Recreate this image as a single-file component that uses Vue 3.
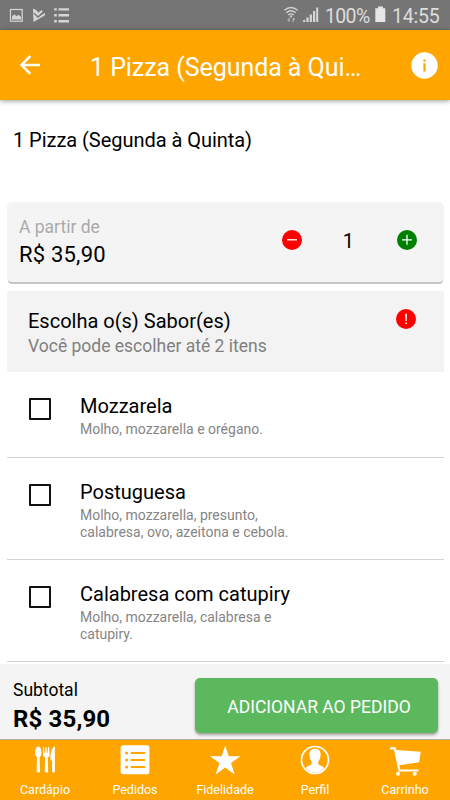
<script setup>
import { ref } from 'vue'

const quantity = ref(1)
const flavors = [
  { name: 'Mozzarela', lines: ['Molho, mozzarella e orégano.'] },
  { name: 'Postuguesa', lines: ['Molho, mozzarella, presunto,', 'calabresa, ovo, azeitona e cebola.'] },
  { name: 'Calabresa com catupiry', lines: ['Molho, mozzarella, calabresa e', 'catupiry.'] },
]
</script>

<template>
  <div class="screen">
    <div class="status">
      <svg class="left-icons" width="80" height="30" viewBox="0 0 80 30">
        <rect x="10.500" y="9.500" width="11.700" height="11.700" fill="none" stroke="#d6d6d6" stroke-width="1.200" />
        <path d="M12 19.500v-3l2.300-2.300 2.200 2 2-1.500 2.500 2.300v2.500z" fill="#d6d6d6" />
        <path d="M33 8.500l3.500 1.800 1.700 2.500 3.300-2.800 1.300 1.600-4.700 4.500-4-3.500-.5.800 4.200 4.500 4.500-3.500 2.500-1.400.3 2.300L33.500 22z" fill="#d6d6d6" />
        <path d="M54.200 9.400h2.600M54.200 15.300h2.600M54.200 21.200h2.600M58.500 9.400H69M58.500 15.300H69M58.500 21.200H69" stroke="#d6d6d6" stroke-width="2.400" />
      </svg>
      <div class="status-right">
        <svg class="signal" width="36" height="30" viewBox="0 0 36 30">
          <g fill="none" stroke="#d2d2d2" stroke-width="1.400">
            <path d="M1.300 10.200Q8 4.800 14.700 10.200" />
            <path d="M3.300 12.700Q8 8.800 12.700 12.700" />
            <path d="M5.200 15Q8 12.700 10.800 15" />
          </g>
          <circle cx="8" cy="16.300" r="1.100" fill="#d2d2d2" />
          <path d="M6.200 17.500v4M4.600 19.700l1.600 1.700M10.200 22v-4M10.200 17.900l1.500 1.600" fill="none" stroke="#b0b0b0" stroke-width="1.300" />
          <path d="M20 20.500l2.200-1V22H20zM23.400 17.500h2.200V22h-2.200zM26.700 14.500h2.200V22h-2.200zM30 11h2.200v11H30zM33.200 7.500h2V22h-2z" fill="#d8d8d8" />
        </svg>
        <span class="percent">100%</span>
        <svg class="battery" width="11" height="30" viewBox="0 0 11 30">
          <path d="M3 6.500h5v1.800h2.300V22H.3V8.300H3z" fill="#e6e6e6" />
        </svg>
        <span class="clock">14:55</span>
      </div>
    </div>

    <header class="bar">
      <svg class="back" width="20" height="20" viewBox="0 0 20 20">
        <path d="M10.300 1L1.500 9.900l8.800 8.900M1.500 9.900H20" fill="none" stroke="#fff" stroke-width="2.500" />
      </svg>
      <h1>1 Pizza (Segunda à Qui…</h1>
      <svg class="info" width="27" height="27" viewBox="0 0 27 27">
        <circle cx="13.500" cy="13.500" r="13.200" fill="#fff" />
        <path d="M12.400 7.500h2.200v2.200h-2.200zM12.400 11.300h2.200v8.200h-2.200z" fill="#ffa500" />
      </svg>
    </header>

    <main>
      <h2>1 Pizza (Segunda à Quinta)</h2>

      <section class="price-card">
        <div class="price">
          <span class="from">A partir de</span>
          <span class="value">R$ 35,90</span>
        </div>
        <div class="stepper">
          <svg width="20" height="20" viewBox="0 0 20 20">
            <circle cx="10" cy="10" r="10" fill="#f00" />
            <path d="M5 9.800h10" stroke="#fff" stroke-width="1.300" />
          </svg>
          <span class="count">{{ quantity }}</span>
          <svg width="20" height="20" viewBox="0 0 20 20">
            <circle cx="10" cy="10" r="10" fill="#008000" />
            <path d="M5 9.800h10M10 4.800v10" stroke="#fff" stroke-width="1.300" />
          </svg>
        </div>
      </section>

      <section class="group">
        <div>
          <h3>Escolha o(s) Sabor(es)</h3>
          <p>Você pode escolher até 2 itens</p>
        </div>
        <svg width="20" height="20" viewBox="0 0 20 20">
          <circle cx="10" cy="10" r="10" fill="#f00" />
          <path d="M9.200 4.700h1.800l-.3 7.300H9.500zM9.300 13.400h1.600v1.700H9.300z" fill="#fff" />
        </svg>
      </section>

      <ul>
        <li v-for="f in flavors" :key="f.name">
          <span class="box"></span>
          <div>
            <h4>{{ f.name }}</h4>
            <p><span v-for="l in f.lines" :key="l">{{ l }}</span></p>
          </div>
        </li>
      </ul>
    </main>

    <section class="subtotal">
      <div>
        <span class="label">Subtotal</span>
        <strong>R$ 35,90</strong>
      </div>
      <button>ADICIONAR AO PEDIDO</button>
    </section>

    <nav>
      <a>
        <svg width="32" height="32" viewBox="0 0 32 32" fill="#fff">
          <path d="M9.300 2.500c2 0 3.200 3 3.200 6 0 2.500-.8 4-1.900 4.700l.4 14.200c0 1.500-3.400 1.500-3.400 0L8 13.200C6.900 12.500 6.100 11 6.100 8.500c0-3 1.200-6 3.200-6z" />
          <path d="M14 3h1l.5 6h.6L16.500 3h1l.4 6h.6l.5-6h1l.7 7.500c0 1.700-.8 2.500-1.900 3l.4 14c0 1.500-3.500 1.500-3.500 0l.4-14c-1.200-.5-2-1.300-2-3z" />
          <path d="M25.900 2.500v25c0 1.400-2.800 1.400-2.800 0V17l-1.700-1.500C21.400 9 22.700 3.500 25.900 2.500z" />
        </svg>
        <span>Cardápio</span>
      </a>
      <a>
        <svg width="32" height="32" viewBox="0 0 32 32">
          <rect x="1.600" y="1.300" width="28.800" height="29" rx="2.500" fill="#fff" />
          <path d="M12.500 9h13M12.500 16h13M12.500 23h13" stroke="#ffa500" stroke-width="1.800" stroke-linecap="round" />
          <g fill="#ffa500"><circle cx="7.600" cy="9" r="1.500" /><circle cx="7.600" cy="16" r="1.500" /><circle cx="7.600" cy="23" r="1.500" /></g>
        </svg>
        <span>Pedidos</span>
      </a>
      <a>
        <svg width="32" height="32" viewBox="0 0 32 32">
          <path d="M16.200 1.400l3.600 10.800h11.600l-9.400 6.700 3.700 11.600-9.500-7-9.500 7 3.700-11.600L1 12.200h11.600z" fill="#fff" />
        </svg>
        <span>Fidelidade</span>
      </a>
      <a>
        <svg width="32" height="32" viewBox="0 0 32 32">
          <circle cx="16" cy="16" r="13.500" fill="none" stroke="#fff" stroke-width="1.700" />
          <path d="M16 4.700c3.700 0 5.900 2.200 5.600 6.300-.2 3.200-1 4.800-2.100 6.200-.5.800-.4 2.800.2 3.400 1.100 1 4.100 1.300 5.500 3.300-2.200 3-5.400 4.800-9.200 4.800s-7-1.800-9.200-4.800c1.400-2 4.400-2.300 5.500-3.300.6-.6.700-2.600.2-3.400-1.100-1.400-1.900-3-2.100-6.200-.3-4.100 1.900-6.300 5.600-6.300z" fill="#fff" />
        </svg>
        <span>Perfil</span>
      </a>
      <a>
        <svg width="32" height="32" viewBox="0 0 32 32" fill="#fff">
          <path d="M2 3.200h4.600l.8 2.700 24.400 1.900-1.600 10.500-19.800 3 .9 4.200h17.200c1.600 0 1.600 2 0 2H9.600L4.900 5.400H2c-1.400 0-1.400-2.200 0-2.200z" />
          <circle cx="9" cy="29.800" r="2" /><circle cx="25.800" cy="29.800" r="2" />
        </svg>
        <span>Carrinho</span>
      </a>
    </nav>
  </div>
</template>

<style>
body { margin: 0; }
</style>

<style scoped>
.screen { width: 450px; height: 800px; display: flex; flex-direction: column; overflow: hidden; background: #fff; color: #000; font-family: Roboto, sans-serif; white-space: nowrap; }
h1, h2, h3, h4, p, ul { margin: 0; padding: 0; font-weight: 400; list-style: none; }
svg { display: block; flex: none; }
.status { flex: none; height: 30px; display: flex; justify-content: space-between; background: #757575; color: #dedede; font-size: 19.500px; line-height: 33px; }
.status-right { display: flex; padding-right: 10px; }
.percent { margin-left: 6px; width: 46px; letter-spacing: -.65px; }
.battery { margin: 0 6px 0 4px; }
.clock { width: 48px; letter-spacing: -.2px; }
.bar { flex: none; height: 70px; display: flex; align-items: center; box-sizing: border-box; padding: 0 12px 0 20px; background: #ffa500; color: #fff; box-shadow: 0 1px 5px rgba(0, 0, 0, .4); position: relative; }
h1 { width: 320px; margin-left: 50px; font-size: 25px; letter-spacing: -.06px; line-height: 30px; padding-top: 5px; }
.bar .back { margin-bottom: 1px; }
.bar .info { margin: 1px 0 0 1px; }
main { flex: 1; min-height: 0; padding: 0 6px 0 7px; overflow: hidden; }
h2 { padding: 25px 6px 47px; font-size: 20px; letter-spacing: -.04px; line-height: 30px; }
.price-card { height: 80px; display: flex; justify-content: space-between; background: #f4f4f4; border-radius: 5px; box-shadow: 0 3px 0 -1px #c6c6c6; }
.price { display: flex; flex-direction: column; padding: 13px 0 0 12px; }
.from { color: #aaa; font-size: 17.500px; line-height: 24px; }
.value { font-size: 22px; letter-spacing: .2px; line-height: 31px; }
.stepper { display: flex; align-items: center; padding: 0 27px 4px 0; }
.count { width: 95.500px; box-sizing: border-box; text-align: center; font-size: 20px; line-height: 24px; padding: 2px 2px 0 0; }
.group { height: 81px; margin-top: 9px; box-sizing: border-box; display: flex; justify-content: space-between; padding: 18px 28px 0 21px; background: #f3f3f3; border-radius: 2px; }
h3 { font-size: 20px; line-height: 24px; }
.group p { color: #808080; font-size: 17.500px; line-height: 26px; }
li { box-sizing: border-box; height: 102px; display: flex; padding: 23px 0 0 22px; border-bottom: 1px solid #d4d4d4; }
li:first-child { height: 86px; }
.box { flex: none; box-sizing: border-box; width: 22px; height: 22px; margin: 3px 29px 0 0; border: 2px solid #111; border-radius: 1px; }
h4 { font-size: 20px; line-height: 23px; }
li p { color: #858585; font-size: 14px; line-height: 16.500px; padding-top: 3px; }
li p span { display: block; }
.subtotal { flex: none; height: 76px; box-sizing: border-box; display: flex; justify-content: space-between; padding: 14px 12px 0 13px; background: #f4f4f4; border-bottom: 1px solid #b5ad9d; }
.label { display: block; font-size: 17.500px; line-height: 24px; }
strong { display: block; font-size: 24px; letter-spacing: .15px; line-height: 34px; }
button { width: 243px; height: 55px; box-sizing: border-box; padding: 2px 0 0 5px; border: 0; border-radius: 5px; background: #5cb85c; color: #fff; font: 17.500px/24px Roboto, sans-serif; box-shadow: 0 2px 3px rgba(0, 0, 0, .35); }
nav { flex: none; height: 60px; display: flex; background: #ffa500; color: #fff; }
nav a { flex: 1; display: flex; flex-direction: column; align-items: center; padding-top: 4px; }
nav span { font-size: 12.500px; line-height: 16px; margin-top: 6px; }
</style>
